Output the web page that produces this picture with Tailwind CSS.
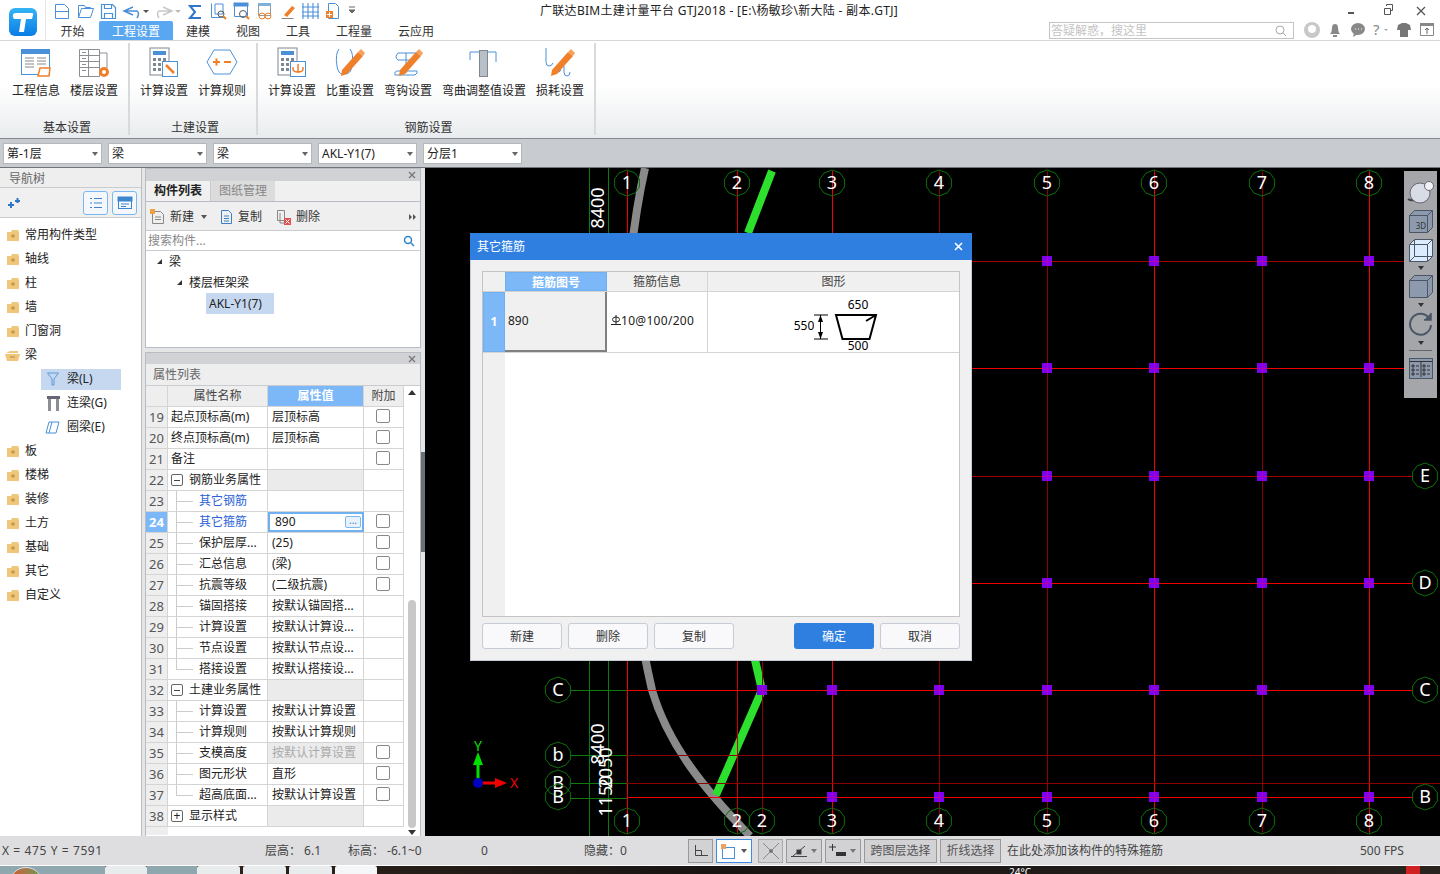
<!DOCTYPE html>
<html lang="zh-CN">
<head>
  <meta charset="UTF-8" />
  <title>GTJ2018</title>
  <script src="https://cdn.jsdelivr.net/npm/@tailwindcss/browser@4"></script>
</head>
<body class="w-[1440px] h-[874px] overflow-hidden bg-[#dedee0] text-[12px] leading-[16px] text-[#222] font-['Noto_Sans','Noto_Sans_CJK_SC',sans-serif]">

  <!-- shared icon parts -->
  <svg class="absolute w-0 h-0">
    <defs>
      <symbol id="pencil" viewBox="0 0 32 32">
        <path d="M8 24 L24 6 L29 10 L13 28 L7 30 Z" fill="#f07f2a"/>
        <path d="M24 6 L27 3 L31 7 L29 10 Z" fill="#f5a05c"/>
      </symbol>
      <symbol id="calc" viewBox="0 0 32 32">
        <rect x="2" y="2" width="19" height="27" fill="#fff" stroke="#7d8894"/>
        <rect x="5" y="5" width="13" height="4" fill="#4a90d9"/>
        <path d="M5 12h3v3H5zM10 12h3v3h-3zM15 12h3v3h-3zM5 17h3v3H5zM10 17h3v3h-3zM5 22h3v3H5zM10 22h3v3h-3z" fill="#7d8894"/>
      </symbol>
      <polygon id="oct" points="0,-13 8,-10 12.4,-4 12.4,4 8,10 0,13 -8,10 -12.4,4 -12.4,-4 -8,-10" fill="none" stroke="#0c6e0c"/>
      <g id="sq"><rect x="-5" y="-5" width="10" height="10" fill="#7d00f0"/><path d="M-5 .5H5M.5-5V5" stroke="#b000b0"/></g>
      <path id="folder" d="M1 4h4l1-2h6l1 2v9H1z" fill="#efc67a"/>
      <linearGradient id="logoBg" x1="0" y1="0" x2="0" y2="1"><stop offset="0" stop-color="#35b4f4"/><stop offset="1" stop-color="#0a7ce6"/></linearGradient>
    </defs>
  </svg>

  <div class="flex flex-col h-[874px]">

    <!-- title bar + ribbon tabs -->
    <header class="flex h-[41px] bg-white border-b border-[#d6d6d6] shrink-0">
      <div class="w-[46px] h-[40px] shrink-0 flex items-center justify-center pt-[4px] border-r border-[#e4e4e4]">
        <svg width="28" height="28" viewBox="0 0 28 28">
          <rect width="28" height="28" rx="6" fill="url(#logoBg)"/>
          <path d="M4 7Q4 5 7 5H23Q25 5 24 7L23 11H17L15 24H10L12 11H6Q4 11 4 9Z" fill="#fff"/>
        </svg>
      </div>
      <div class="flex-1 min-w-0 flex flex-col">
        <div class="flex h-[21px] items-center">
          <div class="w-[494px] shrink-0 flex items-center h-full">
            <svg width="310" height="20" viewBox="46 0 310 20" fill="none" stroke="#4a90d9">
              <path d="M55.500 3.500h9l4 4v10h-13zM55.500 10.500h13"/>
              <path d="M78.500 16.500l3-9h12l-3 9h-12v-12h6l1 2h5v1"/>
              <path d="M101.500 3.500h11l3 3v11h-14zM104.500 3.500v4h7v-4M104.500 17.500v-5h8v5" stroke-width="1.200"/>
              <path d="M133 6 L124 10 L133 14 M125 10 H137 Q140 12 137 17" stroke-width="1.500"/>
              <path d="M143 9l3 3 3-3z" fill="#555" stroke="none"/>
              <path d="M163 6 L172 10 L163 14 M171 10 H159 Q156 12 159 17" stroke="#c8c8c8" stroke-width="1.500"/>
              <path d="M175 9l3 3 3-3z" fill="#bbb" stroke="none"/>
              <path d="M201 5h-11l5 6-5 6h11" stroke-width="2" stroke="#2f77c8"/>
              <path d="M211.500 2.500v14h14M215 3h8v10h-8z"/><circle cx="221" cy="13" r="3" stroke="#555"/><path d="M223 15l3 3" stroke="#f07f2a" stroke-width="2"/>
              <path d="M234.500 2.500h13v13h-13z"/><rect x="234" y="2" width="14" height="3" fill="#4a90d9"/><circle cx="243" cy="13" r="3.500" stroke="#555"/><path d="M246 15l3 3" stroke="#f07f2a" stroke-width="2"/>
              <path d="M258.500 2.500h12v12h-12z" stroke="#999"/><rect x="258" y="2" width="13" height="3" fill="#7fb0d8" stroke="none"/><circle cx="262" cy="15" r="3" stroke="#f07f2a"/><circle cx="268" cy="15" r="3" stroke="#f07f2a"/>
              <path d="M284 14 L292 5 L295 7 L287 16 Z" fill="#f07f2a" stroke="none"/><path d="M281.500 17.500h12" stroke="#888"/>
              <path d="M303 2v16M308 2v16M313 2v16M318 2v16M302 6h17M302 11h17M302 15h17" stroke-width="1.100"/>
              <path d="M328.500 2.500h7l3 3v12h-10z" stroke="#4a90d9"/><rect x="326" y="10" width="7" height="7" fill="#f07f2a" stroke="none"/><path d="M329.500 11v5M327 13.500h5" stroke="#fff"/>
              <path d="M349 6h6M349 9l3 3 3-3z" stroke="#666" fill="#666"/>
            </svg>
          </div>
          <div class="text-[12px] tracking-[0.3px] whitespace-nowrap">广联达BIM土建计量平台 GTJ2018 - [E:\杨敏珍\新大陆 - 副本.GTJ]</div>
          <div class="ml-auto flex items-center h-full">
            <svg width="92" height="20" viewBox="1348 0 92 20" fill="none" stroke="#555">
              <path d="M1348 12h6" stroke-width="2"/>
              <path d="M1384.500 7.500h6v6h-6zM1386.500 5v-1.500h6v6H1391"/>
              <path d="M1417 6l8 8M1425 6l-8 8" stroke-width="1.300"/>
            </svg>
          </div>
        </div>
        <div class="flex items-center h-[19px]">
          <div class="flex h-full items-center text-[#333]">
            <span class="w-[53px] mt-[2px] text-center">开始</span>
            <span class="w-[74px] h-full text-center bg-[#5aa7f1] text-white rounded-t-[2px] leading-[21px]">工程设置</span>
            <span class="w-[50px] mt-[2px] text-center">建模</span>
            <span class="w-[50px] mt-[2px] text-center">视图</span>
            <span class="w-[50px] mt-[2px] text-center">工具</span>
            <span class="w-[62px] mt-[2px] text-center">工程量</span>
            <span class="w-[62px] mt-[2px] text-center">云应用</span>
          </div>
          <div class="ml-[602px] w-[245px] h-[17px] shrink-0 border border-[#c4c4c4] flex items-center pl-[1px] pr-[6px] text-[#c4c4c4]">
            答疑解惑，搜这里
            <svg class="ml-auto" width="12" height="12" viewBox="0 0 12 12" fill="none" stroke="#aaa"><circle cx="5" cy="5" r="4"/><path d="M8 8l3 3"/></svg>
          </div>
          <svg class="ml-[8px] shrink-0" width="136" height="19" viewBox="1302 22 136 19">
            <circle cx="1312" cy="31" r="8" fill="#c8c8c8"/><circle cx="1312" cy="30" r="4" fill="#fff"/>
            <path d="M1330 35q2-2 2-6 0-4 3-4t3 4q0 4 2 6zM1333 36h4v2h-4z" fill="#888"/>
            <ellipse cx="1358" cy="30" rx="7" ry="6" fill="#888"/><path d="M1354 34l-1 4 5-3z" fill="#888"/><path d="M1355 30h1M1358 30h1M1361 30h1" stroke="#fff"/>
            <text x="1373" y="36" font-size="15" fill="#888">?</text><path d="M1384 30l2 2 2-2z" fill="#aaa"/>
            <path d="M1398 26l4-2h4l4 2 1 5-3 0v7h-8v-7h-3z" fill="#777"/>
            <path d="M1420.500 24.500h13v12h-13z" fill="none" stroke="#888"/><rect x="1420" y="24" width="14" height="3" fill="#888"/><path d="M1427 35v-6M1425 31l2-2 2 2" fill="none" stroke="#666"/>
          </svg>
        </div>
      </div>
    </header>

    <!-- ribbon -->
    <div class="flex h-[98px] shrink-0 border-b border-[#85888c] bg-gradient-to-b from-white from-[45%] to-[#e9ecee]">
      <section class="w-[130px] h-[92px] mt-[2px] border-r-2 border-[#d8dadc] pl-[7px]">
        <div class="flex">
          <div class="w-[58px] flex flex-col items-center pt-[3px]">
            <svg class="mb-[5px]" width="32" height="32" viewBox="0 0 32 32" fill="none">
              <rect x="1.500" y="3.500" width="28" height="25" stroke="#4a90d9" fill="#fff"/><rect x="1" y="3" width="29" height="5" fill="#4a90d9"/>
              <path d="M5 12h9M5 15h9M5 18h9M5 21h9M17 12h9M17 15h9M17 18h9" stroke="#888"/>
              <path d="M20 22h10l-1 8H18z" fill="#fff" stroke="#f07f2a" stroke-width="1.500"/>
            </svg>
            工程信息
          </div>
          <div class="w-[58px] flex flex-col items-center pt-[3px]">
            <svg class="mb-[5px]" width="32" height="32" viewBox="0 0 32 32" fill="none" stroke="#8b8f94">
              <path d="M1.500 3.500h20v27h-20zM10.500 3.500v27M1.500 9.500h20M1.500 15.500h20M1.500 21.500h20M4 6.500h4M4 12.500h4M4 18.500h4M4 24.500h4M21 7h8v15"/>
              <circle cx="26" cy="26" r="3.500" stroke="#f07f2a" stroke-width="3"/>
            </svg>
            楼层设置
          </div>
        </div>
        <div class="text-center pr-[1px] mt-[21px] text-[#333]">基本设置</div>
      </section>
      <section class="w-[128px] h-[92px] mt-[2px] border-r-2 border-[#d8dadc] pl-[5px]">
        <div class="flex">
          <div class="w-[58px] flex flex-col items-center pt-[3px]">
            <svg class="mb-[5px]" width="32" height="32" viewBox="0 0 32 32" fill="none">
              <use href="#calc"/><rect x="14.500" y="15.500" width="15" height="15" fill="#fff" stroke="#4a90d9"/>
              <path d="M18 19l3 3 5 5" stroke="#f07f2a" stroke-width="2.500"/>
            </svg>
            计算设置
          </div>
          <div class="w-[58px] flex flex-col items-center pt-[3px]">
            <svg class="mb-[5px]" width="32" height="32" viewBox="0 0 32 32" fill="none">
              <path d="M8 4h16l7 12-7 12H8L1 16z" stroke="#4a90d9" fill="#fff"/>
              <path d="M7 16h7M10.500 12.500v7M18 16h7" stroke="#f07f2a" stroke-width="2"/>
            </svg>
            计算规则
          </div>
        </div>
        <div class="text-center pr-[1px] mt-[21px] text-[#333]">土建设置</div>
      </section>
      <section class="w-[338px] h-[92px] mt-[2px] border-r-2 border-[#d8dadc] pl-[5px]">
        <div class="flex">
          <div class="w-[58px] flex flex-col items-center pt-[3px]">
            <svg class="mb-[5px]" width="32" height="32" viewBox="0 0 32 32" fill="none">
              <use href="#calc"/><rect x="14.500" y="15.500" width="15" height="15" fill="#fff" stroke="#4a90d9"/>
              <path d="M22 18v9M17 21v2q0 3 5 3t5-3v-2" stroke="#f07f2a" stroke-width="1.500"/>
            </svg>
            计算设置
          </div>
          <div class="w-[58px] flex flex-col items-center pt-[3px]">
            <svg class="mb-[5px]" width="32" height="32" viewBox="0 0 32 32" fill="none">
              <path d="M5 3Q1 8 3 20Q4 28 9 28M16 3Q20 8 18 20Q17 28 11 28" stroke="#4a90d9"/>
              <use href="#pencil"/>
            </svg>
            比重设置
          </div>
          <div class="w-[58px] flex flex-col items-center pt-[3px]">
            <svg class="mb-[5px]" width="32" height="32" viewBox="0 0 32 32" fill="none">
              <path d="M6 7h20M6 7q-4 4 0 7h14M6 25q-4 0-3 4h20q3-2 2-4zM14 7v20" stroke="#4a90d9"/>
              <use href="#pencil"/>
            </svg>
            弯钩设置
          </div>
          <div class="w-[94px] flex flex-col items-center pt-[3px]">
            <svg class="mb-[5px]" width="32" height="32" viewBox="0 0 32 32" fill="none">
              <path d="M2 14V6h26v10" stroke="#4a90d9"/>
              <rect x="11.500" y="4.500" width="8" height="26" fill="#b8bfc6" stroke="#7d8894"/>
            </svg>
            弯曲调整值设置
          </div>
          <div class="w-[58px] flex flex-col items-center pt-[3px]">
            <svg class="mb-[5px]" width="32" height="32" viewBox="0 0 32 32" fill="none">
              <path d="M2 2v14q0 4 3 4t4-3M10 22q2 5 5 4t1-4M20 20v6q0 4 3 4t3-4" stroke="#4a90d9"/>
              <use href="#pencil"/>
            </svg>
            损耗设置
          </div>
        </div>
        <div class="text-center mt-[21px] text-[#333]">钢筋设置</div>
      </section>
    </div>

    <!-- layer selects -->
    <div class="flex items-center gap-[6px] h-[29px] pl-[3px] pt-[1px] bg-[#c8cbcf] border-b border-[#707378] shrink-0">
      <div class="w-[99px] h-[21px] bg-white border border-[#b4b8bc] flex items-center pl-[3px] pr-[3px]">第-1层<span class="ml-auto w-0 h-0 border-x-[3px] border-x-transparent border-t-[4px] border-t-[#666]"></span></div>
      <div class="w-[99px] h-[21px] bg-white border border-[#b4b8bc] flex items-center pl-[3px] pr-[3px]">梁<span class="ml-auto w-0 h-0 border-x-[3px] border-x-transparent border-t-[4px] border-t-[#666]"></span></div>
      <div class="w-[99px] h-[21px] bg-white border border-[#b4b8bc] flex items-center pl-[3px] pr-[3px]">梁<span class="ml-auto w-0 h-0 border-x-[3px] border-x-transparent border-t-[4px] border-t-[#666]"></span></div>
      <div class="w-[99px] h-[21px] bg-white border border-[#b4b8bc] flex items-center pl-[3px] pr-[3px]">AKL-Y1(7)<span class="ml-auto w-0 h-0 border-x-[3px] border-x-transparent border-t-[4px] border-t-[#666]"></span></div>
      <div class="w-[99px] h-[21px] bg-white border border-[#b4b8bc] flex items-center pl-[3px] pr-[3px]">分层1<span class="ml-auto w-0 h-0 border-x-[3px] border-x-transparent border-t-[4px] border-t-[#666]"></span></div>
    </div>

    <!-- main -->
    <div class="flex h-[668px] shrink-0">

      <!-- nav tree -->
      <aside class="w-[142px] bg-white border-r border-[#b8bcc4] flex flex-col shrink-0">
        <div class="h-[20px] bg-[#eeeeee] border-b border-[#c8cbd0] pl-[9px] leading-[21px] text-[#666]">导航树</div>
        <div class="h-[30px] bg-[#f0f0f0] border-b border-[#c8cbd0] flex items-center pl-[7px] pr-[4px]">
          <svg width="13" height="12" viewBox="0 0 13 12" fill="#2f77c8"><path d="M1 7h6v2H1zM3 5h2v6H3zM8 3h5v2H8zM9.500 1h2v5h-2z"/></svg>
          <div class="ml-auto w-[25px] h-[24px] rounded-[3px] border border-[#7cb8f0] bg-[#f4f8fd] flex items-center justify-center">
            <svg width="14" height="14" viewBox="0 0 14 14" fill="none" stroke="#3d86cf"><path d="M1 2.500h2M5 2.500h8M1 7h2M5 7h8M1 11.500h2M5 11.500h8"/></svg>
          </div>
          <div class="ml-[4px] w-[25px] h-[24px] rounded-[3px] border border-[#7cb8f0] bg-[#f4f8fd] flex items-center justify-center">
            <svg width="16" height="14" viewBox="0 0 16 14" fill="none" stroke="#3d86cf"><rect x="1.500" y="1.500" width="13" height="11"/><rect x="1" y="1" width="14" height="4" fill="#3d86cf"/><path d="M4 8h8M4 10.500h5"/></svg>
          </div>
        </div>
        <div class="pt-[5px]">
          <div class="h-[24px] flex items-center pl-[6px]"><svg class="mr-[5px]" width="14" height="14" viewBox="0 0 14 14"><use href="#folder"/><path d="M5 8h4M7 6v4" stroke="#b8873a"/></svg>常用构件类型</div>
          <div class="h-[24px] flex items-center pl-[6px]"><svg class="mr-[5px]" width="14" height="14" viewBox="0 0 14 14"><use href="#folder"/><path d="M5 8h4M7 6v4" stroke="#b8873a"/></svg>轴线</div>
          <div class="h-[24px] flex items-center pl-[6px]"><svg class="mr-[5px]" width="14" height="14" viewBox="0 0 14 14"><use href="#folder"/><path d="M5 8h4M7 6v4" stroke="#b8873a"/></svg>柱</div>
          <div class="h-[24px] flex items-center pl-[6px]"><svg class="mr-[5px]" width="14" height="14" viewBox="0 0 14 14"><use href="#folder"/><path d="M5 8h4M7 6v4" stroke="#b8873a"/></svg>墙</div>
          <div class="h-[24px] flex items-center pl-[6px]"><svg class="mr-[5px]" width="14" height="14" viewBox="0 0 14 14"><use href="#folder"/><path d="M5 8h4M7 6v4" stroke="#b8873a"/></svg>门窗洞</div>
          <div class="h-[24px] flex items-center pl-[5px]"><svg class="mr-[5px]" width="15" height="14" viewBox="0 0 15 14"><path d="M1 5l4-2h8v2zM0 6h15l-2 7H2z" fill="#efc67a"/><path d="M5 9h5" stroke="#b8873a"/></svg>梁</div>
          <div class="h-[24px] flex items-center pl-[41px]">
            <div class="w-[80px] h-[21px] bg-[#c6d8f0] flex items-center pl-[6px]">
              <svg class="mr-[8px]" width="12" height="14" viewBox="0 0 12 14" fill="none" stroke="#5a9ad8"><path d="M.500 1h11L7 7v6H5V7z"/></svg>梁(L)
            </div>
          </div>
          <div class="h-[24px] flex items-center pl-[47px]"><svg class="mr-[7px]" width="13" height="15" viewBox="0 0 13 15"><path d="M0 0h13v3H0z" fill="#667"/><path d="M1 3h3v12H1zM9 3h3v12H9z" fill="#8a8f96"/></svg>连梁(G)</div>
          <div class="h-[24px] flex items-center pl-[45px]"><svg class="mr-[7px]" width="15" height="13" viewBox="0 0 15 13" fill="none" stroke="#4a90d9"><path d="M4 1h10l-3 11H1zM7 1L4 12"/></svg>圈梁(E)</div>
          <div class="h-[24px] flex items-center pl-[6px]"><svg class="mr-[5px]" width="14" height="14" viewBox="0 0 14 14"><use href="#folder"/><path d="M5 8h4M7 6v4" stroke="#b8873a"/></svg>板</div>
          <div class="h-[24px] flex items-center pl-[6px]"><svg class="mr-[5px]" width="14" height="14" viewBox="0 0 14 14"><use href="#folder"/><path d="M5 8h4M7 6v4" stroke="#b8873a"/></svg>楼梯</div>
          <div class="h-[24px] flex items-center pl-[6px]"><svg class="mr-[5px]" width="14" height="14" viewBox="0 0 14 14"><use href="#folder"/><path d="M5 8h4M7 6v4" stroke="#b8873a"/></svg>装修</div>
          <div class="h-[24px] flex items-center pl-[6px]"><svg class="mr-[5px]" width="14" height="14" viewBox="0 0 14 14"><use href="#folder"/><path d="M5 8h4M7 6v4" stroke="#b8873a"/></svg>土方</div>
          <div class="h-[24px] flex items-center pl-[6px]"><svg class="mr-[5px]" width="14" height="14" viewBox="0 0 14 14"><use href="#folder"/><path d="M5 8h4M7 6v4" stroke="#b8873a"/></svg>基础</div>
          <div class="h-[24px] flex items-center pl-[6px]"><svg class="mr-[5px]" width="14" height="14" viewBox="0 0 14 14"><use href="#folder"/><path d="M5 8h4M7 6v4" stroke="#b8873a"/></svg>其它</div>
          <div class="h-[24px] flex items-center pl-[6px]"><svg class="mr-[5px]" width="14" height="14" viewBox="0 0 14 14"><use href="#folder"/><path d="M5 8h4M7 6v4" stroke="#b8873a"/></svg>自定义</div>
        </div>
      </aside>

      <!-- component + property panels -->
      <div class="w-[283px] shrink-0 pl-[3px] flex bg-[#e4e5e7]">
        <div class="w-[276px] flex flex-col gap-[4px]">
          <div class="h-[180px] border border-[#b8bcc4] bg-white flex flex-col">
            <div class="h-[12px] bg-[#d0d2d6] flex items-center justify-end pr-[4px]">
              <svg width="8" height="8" viewBox="0 0 8 8" stroke="#777" stroke-width="1.300"><path d="M1 1l6 6M7 1l-6 6"/></svg>
            </div>
            <div class="h-[21px] bg-[#f0f0f0] border-b border-[#b8bcc4] flex">
              <div class="w-[65px] text-center leading-[19px] font-semibold border-r border-[#c8cbd0]">构件列表</div>
              <div class="w-[64px] text-center leading-[19px] bg-[#dcdcdc] text-[#888]">图纸管理</div>
            </div>
            <div class="h-[29px] pt-[1px] bg-[#efefef] border-b border-[#c8cbd0] flex items-center pl-[4px] text-[#333]">
              <svg class="mr-[5px]" width="15" height="16" viewBox="0 0 15 16" fill="none" stroke="#888"><path d="M2.500 2.500h8l3 3v9h-11zM5 8h6M5 10.500h6"/><rect x="0" y="0" width="5" height="5" fill="#f0a040" stroke="none"/></svg>新建
              <span class="ml-[7px] w-0 h-0 border-x-[3px] border-x-transparent border-t-[4px] border-t-[#555]"></span>
              <svg class="ml-[13px] mr-[5px]" width="13" height="16" viewBox="0 0 13 16" fill="none" stroke="#3d7fc4"><path d="M1.500 1.500h7l3 3v10h-10zM4 7h5M4 9.500h5M4 12h5"/></svg>复制
              <svg class="ml-[15px] mr-[5px]" width="14" height="16" viewBox="0 0 14 16" fill="none" stroke="#888"><path d="M.500 1.500h7v10h-7zM3 4v10h4"/><rect x="7" y="9" width="7" height="7" fill="#e05050" stroke="none"/><path d="M8.500 10.500l4 4M12.500 10.500l-4 4" stroke="#fff"/></svg>删除
              <svg class="ml-auto mr-[3px]" width="8" height="8" viewBox="0 0 8 8" fill="#555"><path d="M0 1l3 3-3 3zM4 1l3 3-3 3z"/></svg>
            </div>
            <div class="h-[20px] border-b border-[#c8cbd0] flex items-center pl-[2px] pr-[5px] text-[#888]">
              搜索构件...
              <svg class="ml-auto" width="12" height="12" viewBox="0 0 12 12" fill="none" stroke="#2f86c8" stroke-width="1.500"><circle cx="5" cy="5" r="3.500"/><path d="M8 8l3 3"/></svg>
            </div>
            <div class="flex-1">
              <div class="h-[21px] flex items-center pl-[11px]"><span class="mr-[7px] w-0 h-0 border-l-[5px] border-l-transparent border-b-[5px] border-b-[#333]"></span>梁</div>
              <div class="h-[21px] flex items-center pl-[31px]"><span class="mr-[7px] w-0 h-0 border-l-[5px] border-l-transparent border-b-[5px] border-b-[#333]"></span>楼层框架梁</div>
              <div class="h-[21px] flex items-center pl-[60px]"><span class="h-[21px] w-[68px] bg-[#c6d8f0] pl-[3px] leading-[21px]">AKL-Y1(7)</span></div>
            </div>
          </div>

          <div class="flex-1 border border-[#b8bcc4] border-b-0 bg-white flex flex-col">
            <div class="h-[11px] bg-[#d0d2d6] flex items-center justify-end pr-[4px]">
              <svg width="8" height="8" viewBox="0 0 8 8" stroke="#777" stroke-width="1.300"><path d="M1 1l6 6M7 1l-6 6"/></svg>
            </div>
            <div class="h-[22px] bg-[#eeeeee] border-b border-[#c8cbd0] pl-[7px] leading-[21px] text-[#666]">属性列表</div>
            <div class="flex flex-1">
              <div class="w-[258px]">
                <div class="flex h-[20px] bg-[#eeeeee] text-center leading-[20px] text-[#444]">
                  <div class="w-[22px] border-r border-[#d4d4d4]"></div>
                  <div class="w-[100px] border-r border-[#d4d4d4]">属性名称</div>
                  <div class="w-[96px] border-r border-[#d4d4d4] bg-[#7cb8f8] text-white font-semibold">属性值</div>
                  <div class="w-[40px] border-r border-[#d4d4d4]">附加</div>
                </div>

                <div class="flex h-[21px] border-t border-[#d4d4d4] items-stretch">
                  <div class="w-[22px] bg-[#eeeeee] border-r border-[#d4d4d4] text-center leading-[20px] text-[#555] text-[13px]">19</div>
                  <div class="w-[100px] border-r border-[#d4d4d4] flex items-center pl-[3px]">起点顶标高(m)</div>
                  <div class="w-[96px] border-r border-[#d4d4d4] flex items-center pl-[4px]">层顶标高</div>
                  <div class="w-[40px] border-r border-[#d4d4d4] flex items-center justify-center pr-[2px] pb-[2px]"><span class="w-[14px] h-[14px] rounded-[2px] border border-[#888]"></span></div>
                </div>
                <div class="flex h-[21px] border-t border-[#d4d4d4] items-stretch">
                  <div class="w-[22px] bg-[#eeeeee] border-r border-[#d4d4d4] text-center leading-[20px] text-[#555] text-[13px]">20</div>
                  <div class="w-[100px] border-r border-[#d4d4d4] flex items-center pl-[3px]">终点顶标高(m)</div>
                  <div class="w-[96px] border-r border-[#d4d4d4] flex items-center pl-[4px]">层顶标高</div>
                  <div class="w-[40px] border-r border-[#d4d4d4] flex items-center justify-center pr-[2px] pb-[2px]"><span class="w-[14px] h-[14px] rounded-[2px] border border-[#888]"></span></div>
                </div>
                <div class="flex h-[21px] border-t border-[#d4d4d4] items-stretch">
                  <div class="w-[22px] bg-[#eeeeee] border-r border-[#d4d4d4] text-center leading-[20px] text-[#555] text-[13px]">21</div>
                  <div class="w-[100px] border-r border-[#d4d4d4] flex items-center pl-[3px]">备注</div>
                  <div class="w-[96px] border-r border-[#d4d4d4]"></div>
                  <div class="w-[40px] border-r border-[#d4d4d4] flex items-center justify-center pr-[2px] pb-[2px]"><span class="w-[14px] h-[14px] rounded-[2px] border border-[#888]"></span></div>
                </div>
                <div class="flex h-[21px] border-t border-[#d4d4d4] items-stretch">
                  <div class="w-[22px] bg-[#eeeeee] border-r border-[#d4d4d4] text-center leading-[20px] text-[#555] text-[13px]">22</div>
                  <div class="w-[100px] border-r border-[#d4d4d4] flex items-center pl-[3px]"><span class="mr-[6px] w-[12px] h-[12px] rounded-[2px] border border-[#666] flex items-center justify-center"><i class="w-[6px] h-px bg-[#444]"></i></span>钢筋业务属性</div>
                  <div class="w-[96px] border-r border-[#d4d4d4] bg-[#ebebeb]"></div>
                  <div class="w-[40px] border-r border-[#d4d4d4]"></div>
                </div>
                <div class="flex h-[21px] border-t border-[#d4d4d4] items-stretch">
                  <div class="w-[22px] bg-[#eeeeee] border-r border-[#d4d4d4] text-center leading-[20px] text-[#555] text-[13px]">23</div>
                  <div class="w-[100px] border-r border-[#d4d4d4] flex items-center pl-[3px] text-[#2a5fd8]"><span class="ml-[5px] mr-[6px] w-[17px] h-full border-l border-[#ccc] flex items-center"><i class="w-full h-px bg-[#ccc]"></i></span>其它钢筋</div>
                  <div class="w-[96px] border-r border-[#d4d4d4]"></div>
                  <div class="w-[40px] border-r border-[#d4d4d4]"></div>
                </div>
                <div class="flex h-[21px] border-t border-[#d4d4d4] items-stretch">
                  <div class="w-[22px] bg-[#7cb8f8] border-r border-[#d4d4d4] text-center leading-[20px] text-white font-bold text-[13px]">24</div>
                  <div class="w-[100px] border-r border-[#d4d4d4] flex items-center pl-[3px] text-[#2a5fd8]"><span class="ml-[5px] mr-[6px] w-[17px] h-full border-l border-[#ccc] flex items-center"><i class="w-full h-px bg-[#ccc]"></i></span>其它箍筋</div>
                  <div class="w-[96px] border-2 border-[#6fb0f0] flex items-center pl-[5px] pr-[1px]">890<span class="ml-auto w-[16px] h-[12px] rounded-[2px] border border-[#7cb8f0] bg-[#e8f2fc] text-[#3d7fc4] text-[10px] leading-[7px] text-center">...</span></div>
                  <div class="w-[40px] border-r border-[#d4d4d4] flex items-center justify-center pr-[2px] pb-[2px]"><span class="w-[14px] h-[14px] rounded-[2px] border border-[#888]"></span></div>
                </div>
                <div class="flex h-[21px] border-t border-[#d4d4d4] items-stretch">
                  <div class="w-[22px] bg-[#eeeeee] border-r border-[#d4d4d4] text-center leading-[20px] text-[#555] text-[13px]">25</div>
                  <div class="w-[100px] border-r border-[#d4d4d4] flex items-center pl-[3px]"><span class="ml-[5px] mr-[6px] w-[17px] h-full border-l border-[#ccc] flex items-center"><i class="w-full h-px bg-[#ccc]"></i></span>保护层厚...</div>
                  <div class="w-[96px] border-r border-[#d4d4d4] flex items-center pl-[4px]">(25)</div>
                  <div class="w-[40px] border-r border-[#d4d4d4] flex items-center justify-center pr-[2px] pb-[2px]"><span class="w-[14px] h-[14px] rounded-[2px] border border-[#888]"></span></div>
                </div>
                <div class="flex h-[21px] border-t border-[#d4d4d4] items-stretch">
                  <div class="w-[22px] bg-[#eeeeee] border-r border-[#d4d4d4] text-center leading-[20px] text-[#555] text-[13px]">26</div>
                  <div class="w-[100px] border-r border-[#d4d4d4] flex items-center pl-[3px]"><span class="ml-[5px] mr-[6px] w-[17px] h-full border-l border-[#ccc] flex items-center"><i class="w-full h-px bg-[#ccc]"></i></span>汇总信息</div>
                  <div class="w-[96px] border-r border-[#d4d4d4] flex items-center pl-[4px]">(梁)</div>
                  <div class="w-[40px] border-r border-[#d4d4d4] flex items-center justify-center pr-[2px] pb-[2px]"><span class="w-[14px] h-[14px] rounded-[2px] border border-[#888]"></span></div>
                </div>
                <div class="flex h-[21px] border-t border-[#d4d4d4] items-stretch">
                  <div class="w-[22px] bg-[#eeeeee] border-r border-[#d4d4d4] text-center leading-[20px] text-[#555] text-[13px]">27</div>
                  <div class="w-[100px] border-r border-[#d4d4d4] flex items-center pl-[3px]"><span class="ml-[5px] mr-[6px] w-[17px] h-full border-l border-[#ccc] flex items-center"><i class="w-full h-px bg-[#ccc]"></i></span>抗震等级</div>
                  <div class="w-[96px] border-r border-[#d4d4d4] flex items-center pl-[4px]">(二级抗震)</div>
                  <div class="w-[40px] border-r border-[#d4d4d4] flex items-center justify-center pr-[2px] pb-[2px]"><span class="w-[14px] h-[14px] rounded-[2px] border border-[#888]"></span></div>
                </div>
                <div class="flex h-[21px] border-t border-[#d4d4d4] items-stretch">
                  <div class="w-[22px] bg-[#eeeeee] border-r border-[#d4d4d4] text-center leading-[20px] text-[#555] text-[13px]">28</div>
                  <div class="w-[100px] border-r border-[#d4d4d4] flex items-center pl-[3px]"><span class="ml-[5px] mr-[6px] w-[17px] h-full border-l border-[#ccc] flex items-center"><i class="w-full h-px bg-[#ccc]"></i></span>锚固搭接</div>
                  <div class="w-[96px] border-r border-[#d4d4d4] flex items-center pl-[4px]">按默认锚固搭...</div>
                  <div class="w-[40px] border-r border-[#d4d4d4]"></div>
                </div>
                <div class="flex h-[21px] border-t border-[#d4d4d4] items-stretch">
                  <div class="w-[22px] bg-[#eeeeee] border-r border-[#d4d4d4] text-center leading-[20px] text-[#555] text-[13px]">29</div>
                  <div class="w-[100px] border-r border-[#d4d4d4] flex items-center pl-[3px]"><span class="ml-[5px] mr-[6px] w-[17px] h-full border-l border-[#ccc] flex items-center"><i class="w-full h-px bg-[#ccc]"></i></span>计算设置</div>
                  <div class="w-[96px] border-r border-[#d4d4d4] flex items-center pl-[4px]">按默认计算设...</div>
                  <div class="w-[40px] border-r border-[#d4d4d4]"></div>
                </div>
                <div class="flex h-[21px] border-t border-[#d4d4d4] items-stretch">
                  <div class="w-[22px] bg-[#eeeeee] border-r border-[#d4d4d4] text-center leading-[20px] text-[#555] text-[13px]">30</div>
                  <div class="w-[100px] border-r border-[#d4d4d4] flex items-center pl-[3px]"><span class="ml-[5px] mr-[6px] w-[17px] h-full border-l border-[#ccc] flex items-center"><i class="w-full h-px bg-[#ccc]"></i></span>节点设置</div>
                  <div class="w-[96px] border-r border-[#d4d4d4] flex items-center pl-[4px]">按默认节点设...</div>
                  <div class="w-[40px] border-r border-[#d4d4d4]"></div>
                </div>
                <div class="flex h-[21px] border-t border-[#d4d4d4] items-stretch">
                  <div class="w-[22px] bg-[#eeeeee] border-r border-[#d4d4d4] text-center leading-[20px] text-[#555] text-[13px]">31</div>
                  <div class="w-[100px] border-r border-[#d4d4d4] flex items-center pl-[3px]"><span class="ml-[5px] mr-[6px] w-[17px] h-[11px] self-start border-l border-b border-[#ccc]"></span>搭接设置</div>
                  <div class="w-[96px] border-r border-[#d4d4d4] flex items-center pl-[4px]">按默认搭接设...</div>
                  <div class="w-[40px] border-r border-[#d4d4d4]"></div>
                </div>
                <div class="flex h-[21px] border-t border-[#d4d4d4] items-stretch">
                  <div class="w-[22px] bg-[#eeeeee] border-r border-[#d4d4d4] text-center leading-[20px] text-[#555] text-[13px]">32</div>
                  <div class="w-[100px] border-r border-[#d4d4d4] flex items-center pl-[3px]"><span class="mr-[6px] w-[12px] h-[12px] rounded-[2px] border border-[#666] flex items-center justify-center"><i class="w-[6px] h-px bg-[#444]"></i></span>土建业务属性</div>
                  <div class="w-[96px] border-r border-[#d4d4d4] bg-[#ebebeb]"></div>
                  <div class="w-[40px] border-r border-[#d4d4d4]"></div>
                </div>
                <div class="flex h-[21px] border-t border-[#d4d4d4] items-stretch">
                  <div class="w-[22px] bg-[#eeeeee] border-r border-[#d4d4d4] text-center leading-[20px] text-[#555] text-[13px]">33</div>
                  <div class="w-[100px] border-r border-[#d4d4d4] flex items-center pl-[3px]"><span class="ml-[5px] mr-[6px] w-[17px] h-full border-l border-[#ccc] flex items-center"><i class="w-full h-px bg-[#ccc]"></i></span>计算设置</div>
                  <div class="w-[96px] border-r border-[#d4d4d4] flex items-center pl-[4px]">按默认计算设置</div>
                  <div class="w-[40px] border-r border-[#d4d4d4]"></div>
                </div>
                <div class="flex h-[21px] border-t border-[#d4d4d4] items-stretch">
                  <div class="w-[22px] bg-[#eeeeee] border-r border-[#d4d4d4] text-center leading-[20px] text-[#555] text-[13px]">34</div>
                  <div class="w-[100px] border-r border-[#d4d4d4] flex items-center pl-[3px]"><span class="ml-[5px] mr-[6px] w-[17px] h-full border-l border-[#ccc] flex items-center"><i class="w-full h-px bg-[#ccc]"></i></span>计算规则</div>
                  <div class="w-[96px] border-r border-[#d4d4d4] flex items-center pl-[4px]">按默认计算规则</div>
                  <div class="w-[40px] border-r border-[#d4d4d4]"></div>
                </div>
                <div class="flex h-[21px] border-t border-[#d4d4d4] items-stretch">
                  <div class="w-[22px] bg-[#eeeeee] border-r border-[#d4d4d4] text-center leading-[20px] text-[#555] text-[13px]">35</div>
                  <div class="w-[100px] border-r border-[#d4d4d4] flex items-center pl-[3px]"><span class="ml-[5px] mr-[6px] w-[17px] h-full border-l border-[#ccc] flex items-center"><i class="w-full h-px bg-[#ccc]"></i></span>支模高度</div>
                  <div class="w-[96px] border-r border-[#d4d4d4] bg-[#ebebeb] text-[#aaa] flex items-center pl-[4px]">按默认计算设置</div>
                  <div class="w-[40px] border-r border-[#d4d4d4] flex items-center justify-center pr-[2px] pb-[2px]"><span class="w-[14px] h-[14px] rounded-[2px] border border-[#888]"></span></div>
                </div>
                <div class="flex h-[21px] border-t border-[#d4d4d4] items-stretch">
                  <div class="w-[22px] bg-[#eeeeee] border-r border-[#d4d4d4] text-center leading-[20px] text-[#555] text-[13px]">36</div>
                  <div class="w-[100px] border-r border-[#d4d4d4] flex items-center pl-[3px]"><span class="ml-[5px] mr-[6px] w-[17px] h-full border-l border-[#ccc] flex items-center"><i class="w-full h-px bg-[#ccc]"></i></span>图元形状</div>
                  <div class="w-[96px] border-r border-[#d4d4d4] flex items-center pl-[4px]">直形</div>
                  <div class="w-[40px] border-r border-[#d4d4d4] flex items-center justify-center pr-[2px] pb-[2px]"><span class="w-[14px] h-[14px] rounded-[2px] border border-[#888]"></span></div>
                </div>
                <div class="flex h-[21px] border-t border-[#d4d4d4] items-stretch">
                  <div class="w-[22px] bg-[#eeeeee] border-r border-[#d4d4d4] text-center leading-[20px] text-[#555] text-[13px]">37</div>
                  <div class="w-[100px] border-r border-[#d4d4d4] flex items-center pl-[3px]"><span class="ml-[5px] mr-[6px] w-[17px] h-[11px] self-start border-l border-b border-[#ccc]"></span>超高底面...</div>
                  <div class="w-[96px] border-r border-[#d4d4d4] flex items-center pl-[4px]">按默认计算设置</div>
                  <div class="w-[40px] border-r border-[#d4d4d4] flex items-center justify-center pr-[2px] pb-[2px]"><span class="w-[14px] h-[14px] rounded-[2px] border border-[#888]"></span></div>
                </div>
                <div class="flex h-[21px] border-t border-[#d4d4d4] items-stretch">
                  <div class="w-[22px] bg-[#eeeeee] border-r border-[#d4d4d4] text-center leading-[20px] text-[#555] text-[13px]">38</div>
                  <div class="w-[100px] border-r border-[#d4d4d4] flex items-center pl-[3px]"><span class="mr-[6px] w-[12px] h-[12px] rounded-[2px] border border-[#666] flex items-center justify-center text-[12px] leading-[10px]">+</span>显示样式</div>
                  <div class="w-[96px] border-r border-[#d4d4d4] bg-[#ebebeb]"></div>
                  <div class="w-[40px] border-r border-[#d4d4d4]"></div>
                </div>
                <div class="h-[9px] border-t border-[#d4d4d4]"><div class="w-[22px] h-[8px] bg-[#eeeeee]"></div></div>
              </div>
              <div class="w-[16px] flex flex-col items-center">
                <span class="mt-[4px] w-0 h-0 border-x-[4px] border-x-transparent border-b-[5px] border-b-[#333]"></span>
                <div class="mt-[205px] w-[8px] h-[228px] rounded-[4px] bg-[#c8c8c8]"></div>
                <span class="mt-[2px] w-0 h-0 border-x-[4px] border-x-transparent border-t-[5px] border-t-[#333]"></span>
              </div>
            </div>
          </div>
        </div>
        <div class="w-[4px] flex items-center">
          <div class="w-[4px] h-[100px] bg-[#6b6f76]"></div>
        </div>
      </div>

      <!-- drawing canvas -->
      <div class="relative w-[1015px] bg-black">
        <svg class="absolute inset-0" width="1015" height="668" viewBox="425 168 1015 668" font-size="18" fill="#fff" text-anchor="middle">
          <!-- beams -->
          <path d="M645 168C615 300 615 530 652 690C668 745 705 790 750 836" fill="none" stroke="#8a8a8a" stroke-width="8"/>
          <path d="M772 171L748 233M755 660L762 690L716 795" fill="none" stroke="#2ee02e" stroke-width="8"/>

          <g shape-rendering="crispEdges" stroke-width="1" fill="none">
            <path d="M589.500 168V836M608.500 168V836" stroke="#0c7a0c"/>
            <path d="M570 690.500H627M570 755.500H627M570 783.500H627M570 798.500H627" stroke="#0c7a0c"/>
            <path d="M627.500 171V833M832.500 171V833M1154.500 171V833M1369.500 171V833" stroke="#f00000"/>
            <path d="M737.500 171V833" stroke="#d00000"/>
            <path d="M762.500 660V833M939.500 171V833M1047.500 171V833M1262.500 171V833" stroke="#8c0000"/>
            <path d="M627 690.500H1413M972 368.500H1405M972 583.500H1413M627 797.500H1413" stroke="#f00000"/>
            <path d="M972 261.500H1405M972 476.500H1413" stroke="#a00000"/>
            <path d="M627 755.500H1440M627 783.500H1440" stroke="#8c0000"/>
          </g>

          <use href="#sq" x="1047" y="261"/><use href="#sq" x="1154" y="261"/><use href="#sq" x="1262" y="261"/><use href="#sq" x="1369" y="261"/>
          <use href="#sq" x="1047" y="368"/><use href="#sq" x="1154" y="368"/><use href="#sq" x="1262" y="368"/><use href="#sq" x="1369" y="368"/>
          <use href="#sq" x="1047" y="476"/><use href="#sq" x="1154" y="476"/><use href="#sq" x="1262" y="476"/><use href="#sq" x="1369" y="476"/>
          <use href="#sq" x="1047" y="583"/><use href="#sq" x="1154" y="583"/><use href="#sq" x="1262" y="583"/><use href="#sq" x="1369" y="583"/>
          <use href="#sq" x="762" y="690"/><use href="#sq" x="832" y="690"/><use href="#sq" x="939" y="690"/><use href="#sq" x="1047" y="690"/><use href="#sq" x="1154" y="690"/><use href="#sq" x="1262" y="690"/><use href="#sq" x="1369" y="690"/>
          <use href="#sq" x="832" y="797"/><use href="#sq" x="939" y="797"/><use href="#sq" x="1047" y="797"/><use href="#sq" x="1154" y="797"/><use href="#sq" x="1262" y="797"/><use href="#sq" x="1369" y="797"/>

          <!-- axis bubbles, top -->
          <use href="#oct" x="627" y="183"/><text x="627" y="189">1</text>
          <use href="#oct" x="737" y="183"/><text x="737" y="189">2</text>
          <use href="#oct" x="832" y="183"/><text x="832" y="189">3</text>
          <use href="#oct" x="939" y="183"/><text x="939" y="189">4</text>
          <use href="#oct" x="1047" y="183"/><text x="1047" y="189">5</text>
          <use href="#oct" x="1154" y="183"/><text x="1154" y="189">6</text>
          <use href="#oct" x="1262" y="183"/><text x="1262" y="189">7</text>
          <use href="#oct" x="1369" y="183"/><text x="1369" y="189">8</text>
          <!-- bottom -->
          <use href="#oct" x="627" y="821"/><text x="627" y="827">1</text>
          <use href="#oct" x="737" y="821"/><text x="737" y="827">2</text>
          <use href="#oct" x="762" y="821"/><text x="762" y="827">2</text>
          <use href="#oct" x="832" y="821"/><text x="832" y="827">3</text>
          <use href="#oct" x="939" y="821"/><text x="939" y="827">4</text>
          <use href="#oct" x="1047" y="821"/><text x="1047" y="827">5</text>
          <use href="#oct" x="1154" y="821"/><text x="1154" y="827">6</text>
          <use href="#oct" x="1262" y="821"/><text x="1262" y="827">7</text>
          <use href="#oct" x="1369" y="821"/><text x="1369" y="827">8</text>
          <!-- left -->
          <use href="#oct" x="558" y="690"/><text x="558" y="696">C</text>
          <use href="#oct" x="558" y="755"/><text x="558" y="761">b</text>
          <use href="#oct" x="558" y="783"/><text x="558" y="789">B</text>
          <use href="#oct" x="558" y="797"/><text x="558" y="803">B</text>
          <!-- right -->
          <use href="#oct" x="1425" y="476"/><text x="1425" y="482">E</text>
          <use href="#oct" x="1425" y="583"/><text x="1425" y="589">D</text>
          <use href="#oct" x="1425" y="690"/><text x="1425" y="696">C</text>
          <use href="#oct" x="1425" y="797"/><text x="1425" y="803">B</text>

          <!-- dimensions -->
          <text transform="translate(604 208) rotate(-90)">8400</text>
          <text transform="translate(604 744) rotate(-90)">8400</text>
          <text transform="translate(612 768) rotate(-90)">2050</text>
          <text transform="translate(612 796) rotate(-90)">1150</text>

          <!-- origin -->
          <path d="M478 782V762" stroke="#00e000" stroke-width="3"/><path d="M478 752l-5 13h10z" fill="#00e000"/>
          <path d="M478 783H498" stroke="#f00000" stroke-width="3"/><path d="M507 783l-12-5v10z" fill="#f00000"/>
          <circle cx="478" cy="783" r="5" fill="#0000c0"/>
          <text x="478" y="751" font-size="14" fill="#00e000">Y</text>
          <text x="514" y="788" font-size="14" fill="#f00000">X</text>
        </svg>

        <!-- view toolbar -->
        <div class="absolute left-[979px] top-[3px] w-[33px] h-[227px] bg-[#a4a6aa] flex flex-col items-center pt-[9px]">
          <svg width="28" height="26" viewBox="0 0 28 26"><path d="M1 19q3 2 7 1" stroke="#444" stroke-width="2" fill="none"/><circle cx="13" cy="13" r="10" fill="#d8dce4" stroke="#667"/><circle cx="22" cy="6" r="4.500" fill="#f0f2f6" stroke="#667"/></svg>
          <svg class="mt-[3px]" width="24" height="24" viewBox="0 0 24 24" fill="#8d99ad" stroke="#4a5566"><path d="M.500 6.500l5-5h18v17l-5 5H.500zM.500 6.500h18v17M18.500 6.500l5-5"/><text x="12" y="20" font-size="8" fill="#333" stroke="none" text-anchor="middle">3D</text></svg>
          <svg class="mt-[5px]" width="24" height="24" viewBox="0 0 24 24" fill="#dcecff" stroke="#4a5566"><path d="M.500 6.500l5-5h18v17l-5 5H.500z"/><path d="M.500 6.500h18v17M18.500 6.500l5-5M5.500 1.500v17h18M5.500 18.500l-5 5"/></svg>
          <span class="mt-[4px] w-0 h-0 border-x-[3px] border-x-transparent border-t-[4px] border-t-[#333]"></span>
          <svg class="mt-[4px]" width="24" height="24" viewBox="0 0 24 24" fill="#8d99ad" stroke="#4a5566"><path d="M.500 6.500l5-5h18v17l-5 5H.500zM.500 6.500h18v17M18.500 6.500l5-5"/></svg>
          <span class="mt-[5px] w-0 h-0 border-x-[3px] border-x-transparent border-t-[4px] border-t-[#333]"></span>
          <svg class="mt-[5px]" width="24" height="24" viewBox="0 0 24 24" fill="none" stroke="#4a5566" stroke-width="2"><path d="M20 6A10.500 10.500 0 1 0 22 13"/><path d="M22 1v7h-7" stroke-width="1.500" fill="#4a5566"/></svg>
          <span class="mt-[5px] w-0 h-0 border-x-[3px] border-x-transparent border-t-[4px] border-t-[#333]"></span>
          <div class="mt-[5px] w-[23px] h-px bg-[#666]"></div>
          <svg class="mt-[5px]" width="24" height="23" viewBox="0 0 24 23" fill="#8d99ad" stroke="#4a5566"><rect x=".500" y="2.500" width="23" height="20"/><path d="M.500 5.500h23M12 6v15M3 9h2v2H3zM7 10h3M3 13h2v2H3zM7 14h3M3 17h2v2H3zM7 18h3M14 9h2v2h-2zM18 10h3M14 13h2v2h-2zM18 14h3M14 17h2v2h-2zM18 18h3" fill="none" stroke="#333"/></svg>
        </div>

        <!-- dialog -->
        <div class="absolute left-[45px] top-[65px] w-[502px] h-[428px] bg-[#f0f0f0] border border-t-0 border-[#c5cbd8] flex flex-col">
          <div class="h-[27px] bg-[#2e7fe0] flex items-center pl-[7px] pr-[9px] text-white -mx-px">
            其它箍筋
            <svg class="ml-auto" width="9" height="9" viewBox="0 0 9 9" stroke="#fff" stroke-width="1.600"><path d="M1 1l7 7M8 1l-7 7"/></svg>
          </div>
          <div class="mt-[11px] mx-[11px] h-[346px] border border-[#c4c4c4] flex flex-col">
            <div class="flex h-[20px] border-b border-[#d4d4d4] text-center leading-[19px] text-[#444] shrink-0">
              <div class="w-[22px]"></div>
              <div class="w-[102px] bg-[#7cb8f8] text-white font-semibold border border-[#6fb0f0]">箍筋图号</div>
              <div class="w-[101px] border-r border-[#d4d4d4]">箍筋信息</div>
              <div class="flex-1">图形</div>
            </div>
            <div class="flex h-[61px] border-b border-[#d4d4d4] shrink-0">
              <div class="w-[22px] bg-[#7cb8f8] border border-[#6fb0f0] text-white font-bold flex items-center justify-center">1</div>
              <div class="w-[102px] bg-[#f0f0f0] border-r-2 border-b-2 border-[#808080] flex items-center pl-[3px]">890</div>
              <div class="w-[101px] bg-white border-r border-[#d4d4d4] flex items-center pl-[4px] pb-[2px] tracking-[0.3px]">
                <svg class="mb-[3px]" width="10" height="10" viewBox="0 0 10 10" fill="none" stroke="#222"><ellipse cx="5" cy="4.500" rx="3.500" ry="2.500"/><path d="M5 0v9M0 9.500h10"/></svg>10@100/200
              </div>
              <div class="flex-1 bg-white">
                <svg class="overflow-visible" width="251" height="59" viewBox="707 292 251 59" font-size="12" text-anchor="middle" fill="#000">
                  <text x="857" y="309">650</text>
                  <text x="803" y="330">550</text>
                  <text x="857" y="350">500</text>
                  <path d="M813 315h14M813 339h14M819.500 315v24" stroke="#000" fill="none"/>
                  <path d="M819.500 315l-2.500 7h5zM819.500 339l-2.500-7h5z" fill="#000"/>
                  <path d="M835 315H875L868.500 339H841.500ZM875 315L865 321" stroke="#000" stroke-width="2" fill="none"/>
                </svg>
              </div>
            </div>
            <div class="flex flex-1 bg-white">
              <div class="w-[22px] bg-[#f0f0f0]"></div>
            </div>
          </div>
          <div class="mt-[6px] mx-[11px] flex gap-[6px]">
            <button class="w-[80px] h-[26px] pt-[1px] rounded-[3px] border border-[#c5cbd8] bg-[#f9f9fb] text-[#333]">新建</button>
            <button class="w-[80px] h-[26px] pt-[1px] rounded-[3px] border border-[#c5cbd8] bg-[#f9f9fb] text-[#333]">删除</button>
            <button class="w-[80px] h-[26px] pt-[1px] rounded-[3px] border border-[#c5cbd8] bg-[#f9f9fb] text-[#333]">复制</button>
            <button class="ml-[54px] w-[80px] h-[26px] pt-[1px] rounded-[3px] bg-[#2e7fe0] text-white">确定</button>
            <button class="w-[80px] h-[26px] pt-[1px] rounded-[3px] border border-[#c5cbd8] bg-[#f9f9fb] text-[#333]">取消</button>
          </div>
        </div>
      </div>
    </div>

    <!-- status bar -->
    <footer class="flex items-center h-[30px] pt-[1px] bg-[#dedee0] text-[#444] border-b border-white shrink-0">
      <span class="ml-[2px] w-[263px] tracking-[0.6px]">X = 475 Y = 7591</span>
      <span class="w-[83px]">层高： 6.1</span>
      <span class="w-[133px]">标高： -6.1~0</span>
      <span class="w-[103px]">0</span>
      <span class="w-[104px]">隐藏：0</span>
      <div class="w-[25px] h-[24px] border border-[#999] bg-[#d2d2d4] flex items-center justify-center">
        <svg width="14" height="12" viewBox="0 0 14 12" fill="none" stroke="#444"><path d="M1.500 0v10.500H14M1.500 5.500h6v5"/></svg>
      </div>
      <div class="ml-[3px] w-[36px] h-[24px] border border-[#3d8ae0] bg-white flex items-center pl-[4px] pr-[4px]">
        <svg width="15" height="15" viewBox="0 0 15 15" fill="none"><rect x="1.500" y="3.500" width="12" height="11" stroke="#4a90d9"/><rect x="0" y="0" width="5" height="5" fill="#f0a060"/></svg>
        <span class="ml-auto w-0 h-0 border-x-[3px] border-x-transparent border-t-[4px] border-t-[#555]"></span>
      </div>
      <div class="ml-[6px] w-[25px] h-[24px] border border-[#aaa] bg-[#d2d2d4] flex items-center justify-center">
        <svg width="18" height="18" viewBox="0 0 18 18" stroke="#888" fill="none"><path d="M1 1l16 16M17 1L1 17"/><circle cx="9" cy="9" r="1.500" fill="#666"/></svg>
      </div>
      <div class="ml-[3px] w-[36px] h-[24px] border border-[#999] bg-[#d2d2d4] flex items-center pl-[4px] pr-[4px]">
        <svg width="17" height="12" viewBox="0 0 17 12" fill="none" stroke="#444"><path d="M0 11.500h16M2 11l12-10"/><rect x="6" y="5" width="4" height="4" fill="#333"/></svg>
        <span class="ml-auto w-0 h-0 border-x-[3px] border-x-transparent border-t-[4px] border-t-[#777]"></span>
      </div>
      <div class="ml-[3px] w-[36px] h-[24px] border border-[#999] bg-[#d2d2d4] flex items-center pl-[3px] pr-[4px]">
        <svg width="18" height="14" viewBox="0 0 18 14"><path d="M0 3h7M3.500 0v7" stroke="#333" fill="none"/><rect x="7" y="8" width="10" height="4" fill="#333"/></svg>
        <span class="ml-auto w-0 h-0 border-x-[3px] border-x-transparent border-t-[4px] border-t-[#777]"></span>
      </div>
      <div class="ml-[3px] w-[73px] h-[24px] border border-[#999] bg-[#d2d2d4] text-center leading-[22px] text-[#555]">跨图层选择</div>
      <div class="ml-[3px] w-[61px] h-[24px] border border-[#999] bg-[#d2d2d4] text-center leading-[22px] text-[#555]">折线选择</div>
      <span class="ml-[6px] w-[353px]">在此处添加该构件的特殊箍筋</span>
      <span>500 FPS</span>
    </footer>

    <!-- desktop taskbar, cut off by the window edge -->
    <div class="flex flex-1 overflow-hidden bg-gradient-to-r from-[#3a2a20] via-[#171412] to-[#2a2420]">
      <div class="w-[105px] h-full bg-[#8fa7ae] pl-[9px] pt-[1px] shrink-0"><div class="w-[34px] h-[34px] rounded-full border border-[#dde] bg-gradient-to-r from-[#d05030] to-[#5a9a5a]"></div></div>
      <div class="w-[42px] bg-[#e8ecec] rounded-t-[2px] shrink-0"></div>
      <div class="w-[50px] bg-[#8fa7ae] shrink-0"></div>
      <div class="w-[43px] bg-[#e8ecec] rounded-t-[2px] shrink-0"></div>
      <div class="ml-[3px] w-[43px] bg-[#e8ecec] rounded-t-[2px] shrink-0"></div>
      <div class="ml-[3px] w-[43px] bg-[#e8ecec] rounded-t-[2px] shrink-0"></div>
      <div class="ml-[3px] w-[42px] bg-[#f4f6f8] rounded-t-[2px] shrink-0"></div>
      <span class="ml-[632px] text-[10px] leading-[12px] text-white">24°C</span>
      <div class="ml-[375px] w-[14px] bg-[#d02020]"></div>
    </div>
  </div>
</body>
</html>
